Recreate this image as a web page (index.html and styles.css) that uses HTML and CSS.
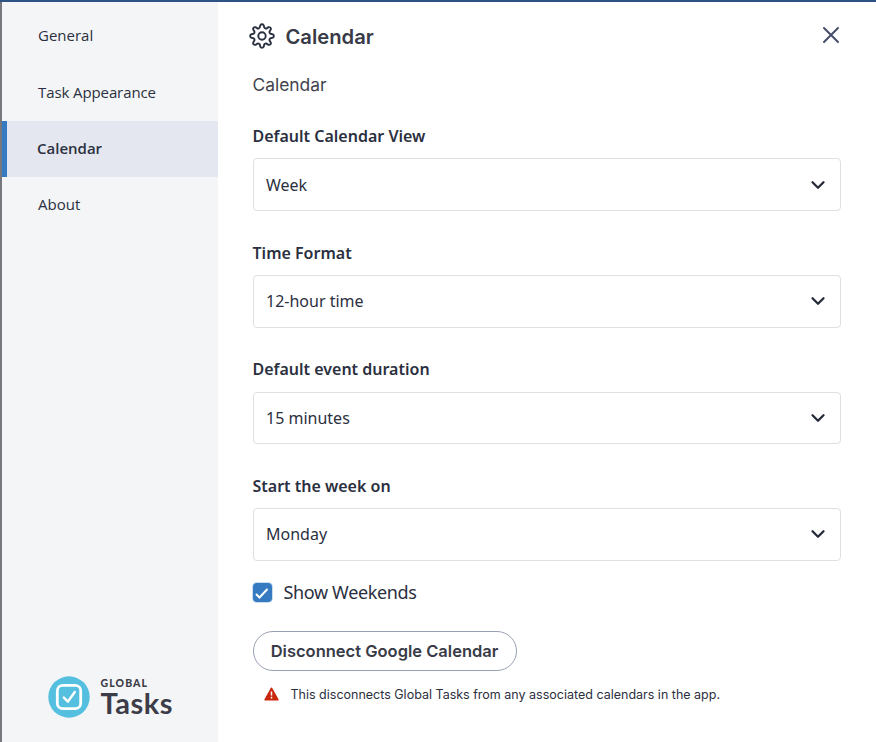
FILE: index.html
```html
<!DOCTYPE html>
<html lang="en">
<head>
  <meta charset="UTF-8" />
  <meta name="viewport" content="width=device-width, initial-scale=1.0"/>
  <title>Global Tasks - Calendar Settings</title>
  <link rel="stylesheet" href="styles.css">
</head>
<body>
  <div class="settings">
    <nav class="sidebar">
      <a class="nav-item">General</a>
      <a class="nav-item wide">Task Appearance</a>
      <a class="nav-item active">Calendar</a>
      <a class="nav-item">About</a>

      <div class="logo">
        <svg width="42" height="42" viewBox="0 0 42 42" fill="none">
          <circle cx="21" cy="21" r="20.7" fill="#55bfe0"/>
          <rect x="9.3" y="9.3" width="23.4" height="23.4" rx="5.5" stroke="#fff" stroke-width="2.8"/>
          <path d="M15.8 21.5l4 4.2 7-9.7" stroke="#fff" stroke-width="2.4" stroke-linecap="round" stroke-linejoin="round"/>
        </svg>
        <div class="logo-text">
          <span class="logo-global">GLOBAL</span>
          <span class="logo-tasks">Tasks</span>
        </div>
      </div>
    </nav>

    <main class="content">
      <header class="header">
        <svg width="26" height="26" viewBox="0 0 26 26" fill="none" stroke="#2b3040" stroke-width="1.9" stroke-linejoin="round">
          <circle cx="13" cy="13" r="3.7"/>
          <path d="M11 3.61L11.43 2.1A1.8 1.8 0 0 1 14.57 2.1L15 3.61A1.9 1.9 0 0 0 18.23 4.95L19.6 4.18A1.8 1.8 0 0 1 21.82 6.4L21.05 7.77A1.9 1.9 0 0 0 22.39 11L23.9 11.43A1.8 1.8 0 0 1 23.9 14.57L22.39 15A1.9 1.9 0 0 0 21.05 18.23L21.82 19.6A1.8 1.8 0 0 1 19.6 21.82L18.23 21.05A1.9 1.9 0 0 0 15 22.39L14.57 23.9A1.8 1.8 0 0 1 11.43 23.9L11 22.39A1.9 1.9 0 0 0 7.77 21.05L6.4 21.82A1.8 1.8 0 0 1 4.18 19.6L4.95 18.23A1.9 1.9 0 0 0 3.61 15L2.1 14.57A1.8 1.8 0 0 1 2.1 11.43L3.61 11A1.9 1.9 0 0 0 4.95 7.77L4.18 6.4A1.8 1.8 0 0 1 6.4 4.18L7.77 4.95A1.9 1.9 0 0 0 11 3.61z"/>
        </svg>
        <h1>Calendar</h1>
        <svg class="close" width="18" height="18" viewBox="0 0 18 18" fill="none" stroke="#464e68" stroke-width="2" stroke-linecap="round">
          <path d="M2 2l14 14M16 2L2 16"/>
        </svg>
      </header>

      <h2>Calendar</h2>

      <div class="field">
        <label>Default Calendar View</label>
        <div class="select">
          <span>Week</span>
          <svg class="chevron" width="16" height="10" viewBox="0 0 16 10"><path d="M2.5 2.2L8 7.7l5.5-5.5"/></svg>
        </div>
      </div>
      <div class="field">
        <label>Time Format</label>
        <div class="select">
          <span>12-hour time</span>
          <svg class="chevron" width="16" height="10" viewBox="0 0 16 10"><path d="M2.5 2.2L8 7.7l5.5-5.5"/></svg>
        </div>
      </div>
      <div class="field">
        <label>Default event duration</label>
        <div class="select">
          <span>15 minutes</span>
          <svg class="chevron" width="16" height="10" viewBox="0 0 16 10"><path d="M2.5 2.2L8 7.7l5.5-5.5"/></svg>
        </div>
      </div>
      <div class="field">
        <label>Start the week on</label>
        <div class="select">
          <span>Monday</span>
          <svg class="chevron" width="16" height="10" viewBox="0 0 16 10"><path d="M2.5 2.2L8 7.7l5.5-5.5"/></svg>
        </div>
      </div>

      <div class="check-row">
        <span class="checkbox">
          <svg width="18" height="18" viewBox="0 0 18 18" fill="none" stroke="#fff" stroke-width="2"><path d="M3 11l3.5 3.5 8-8.500"/></svg>
        </span>
        <span class="check-label">Show Weekends</span>
      </div>

      <button class="disconnect">Disconnect Google Calendar</button>

      <div class="warning">
        <svg width="15" height="14" viewBox="0 0 15 14">
          <path d="M7.5 1.2L14 12.8H1z" fill="#c9260c" stroke="#c9260c" stroke-width="1.4" stroke-linejoin="round"/>
          <path d="M7.5 4.5v4M7.5 9.8v1.6" stroke="#fff" stroke-width="1.5"/>
        </svg>
        <span>This disconnects Global Tasks from any associated calendars in the app.</span>
      </div>
    </main>
  </div>
</body>
</html>
```

FILE: styles.css
```css
* {
  box-sizing: border-box;
}
body {
  margin: 0;
  background: #fff;
  color: #2b3040;
  font-family: "Noto Sans", "Open Sans", sans-serif;
}
.settings {
  display: flex;
  height: 742px;
  border-top: 2px solid #2f5285;
}
.sidebar {
  display: flex;
  flex-direction: column;
  width: 217.5px;
  padding-top: 6px;
  background: #f4f5f7;
  border-left: 2px solid #77787d;
}
.nav-item {
  height: 56.4px;
  padding-left: 36px;
  line-height: 55px;
  font-family: "Open Sans", sans-serif;
  font-size: 15px;
}
.nav-item.wide {
  line-height: 57px;
  letter-spacing: -0.1px;
}
.nav-item.active {
  padding-left: 30px;
  background: #e4e7ef;
  border-left: 5px solid #367bc1;
  font-weight: 600;
}
.logo {
  display: flex;
  gap: 10.5px;
  margin-top: auto;
  padding: 0 0 24px 46px;
}
.logo-text {
  display: flex;
  flex-direction: column;
  color: #3c3d49;
  font-family: Lato, sans-serif;
}
.logo-global {
  margin-top: 2px;
  font-size: 10.5px;
  font-weight: 900;
  line-height: 11px;
  letter-spacing: 1.1px;
}
.logo-tasks {
  font-size: 29px;
  font-weight: 700;
  line-height: 28px;
  letter-spacing: 0.5px;
}
.content {
  flex: 1;
  padding: 0 35.5px 0 35px;
}
.header {
  display: flex;
  align-items: center;
  height: 68px;
  margin-left: -4px;
}
.header svg {
  margin-top: -1px;
}
h1 {
  margin: 1px 0 0 11px;
  font-family: Inter, sans-serif;
  font-size: 20.2px;
  font-weight: 600;
  color: #383b47;
}
.header .close {
  margin: -2px 1px 0 auto;
}
h2 {
  margin: 1px 0 26px;
  font-family: Inter, sans-serif;
  font-size: 17.4px;
  font-weight: 400;
  line-height: 27px;
  color: #41434e;
}
.field {
  height: 116.6px;
}
.field label {
  display: block;
  margin-bottom: 10.4px;
  font-size: 16px;
  font-weight: 600;
  line-height: 24px;
}
.select {
  display: flex;
  align-items: center;
  justify-content: space-between;
  height: 52.6px;
  padding: 0 14px 0 12.5px;
  border: 1px solid #dfe0e2;
  border-radius: 4px;
  font-size: 16px;
}
.chevron {
  fill: none;
  stroke: #252b39;
  stroke-width: 2.3;
  stroke-linecap: round;
  stroke-linejoin: round;
}
.check-row {
  display: flex;
  align-items: center;
  gap: 12px;
  height: 26px;
  margin-top: -11px;
}
.checkbox {
  display: flex;
  align-items: center;
  justify-content: center;
  width: 19px;
  height: 19px;
  background: #367bc1;
  border-radius: 4px;
  box-shadow: 0 0 0 1px #c9dcf0;
}
.check-label {
  margin-top: -1px;
  font-size: 18px;
  letter-spacing: -0.35px;
}
.disconnect {
  height: 40px;
  width: 264px;
  margin-top: 25.5px;
  padding: 0;
  background: #fff;
  border: 1px solid #9aa0b4;
  border-radius: 21px;
  color: #383b47;
  font-family: Inter, sans-serif;
  font-size: 16.5px;
  font-weight: 600;
}
.warning {
  display: flex;
  align-items: center;
  gap: 12px;
  margin: 16px 0 0 11px;
  font-family: Inter, sans-serif;
  font-size: 12.5px;
}
```
